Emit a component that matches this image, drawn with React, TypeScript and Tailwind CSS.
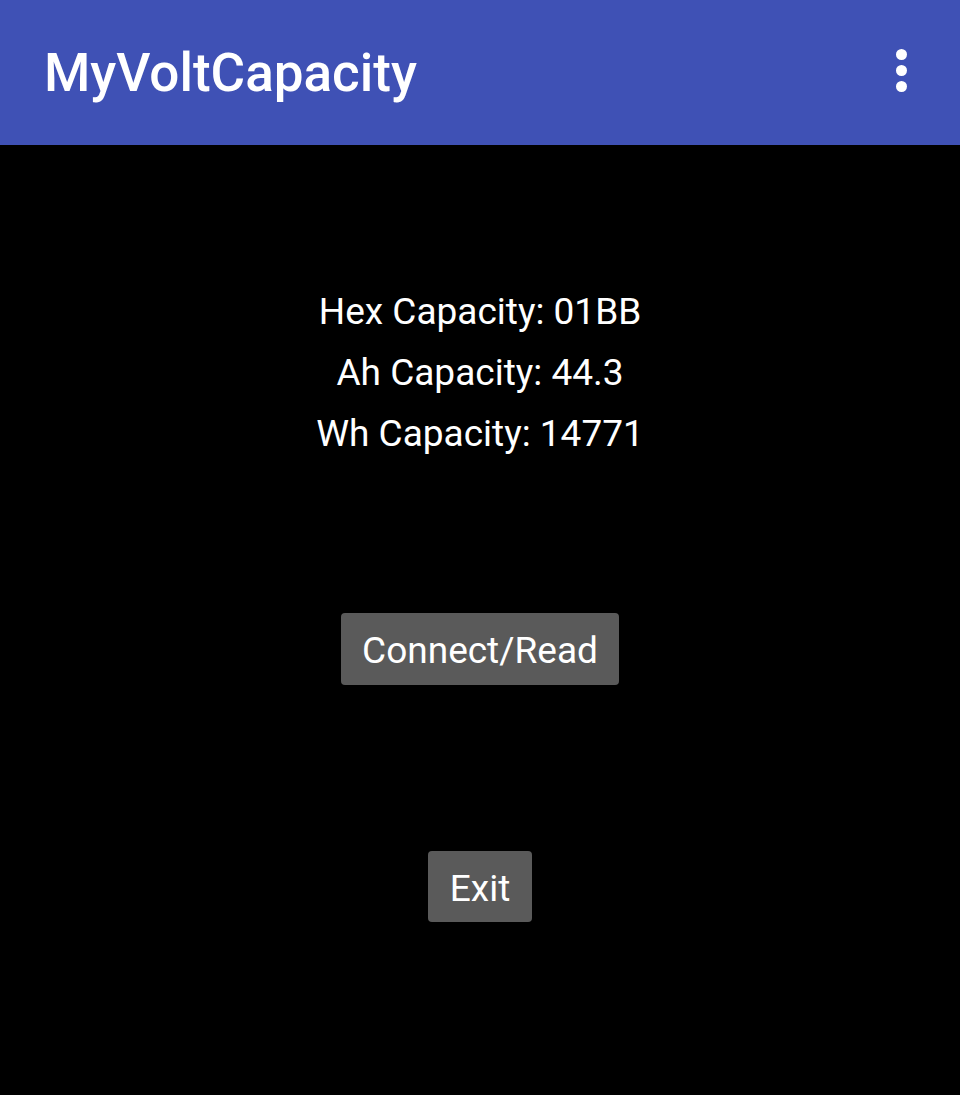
export default function App() {
  return (
    <div className="min-h-[1095px] w-full bg-black font-['Roboto',sans-serif]">
      {/* Toolbar */}
      <header className="flex h-[145px] items-center justify-between bg-[#3f51b5] pl-[44px] pr-[53px]">
        <h1 className="pt-[2px] text-[53px] font-medium leading-none text-white">MyVoltCapacity</h1>
        <button aria-label="More options" className="flex flex-col items-center gap-[5px] pb-[4px]">
          <span className="h-[11px] w-[11px] rounded-full bg-white" />
          <span className="h-[11px] w-[11px] rounded-full bg-white" />
          <span className="h-[11px] w-[11px] rounded-full bg-white" />
        </button>
      </header>

      <main className="flex flex-col items-center">
        <div className="mt-[136px] flex flex-col items-center text-[37px] leading-[61px] text-white">
          <p>Hex Capacity: 01BB</p>
          <p>Ah Capacity: 44.3</p>
          <p>Wh Capacity: 14771</p>
        </div>

        <button className="mt-[149px] h-[72px] rounded-[4px] bg-[#5a5a5a] px-[21px] pt-[4px] text-[37px] text-white">
          Connect/Read
        </button>

        <button className="mt-[166px] h-[71px] rounded-[4px] bg-[#5a5a5a] px-[22px] pt-[4px] text-[37px] text-white">
          Exit
        </button>
      </main>
    </div>
  );
}
